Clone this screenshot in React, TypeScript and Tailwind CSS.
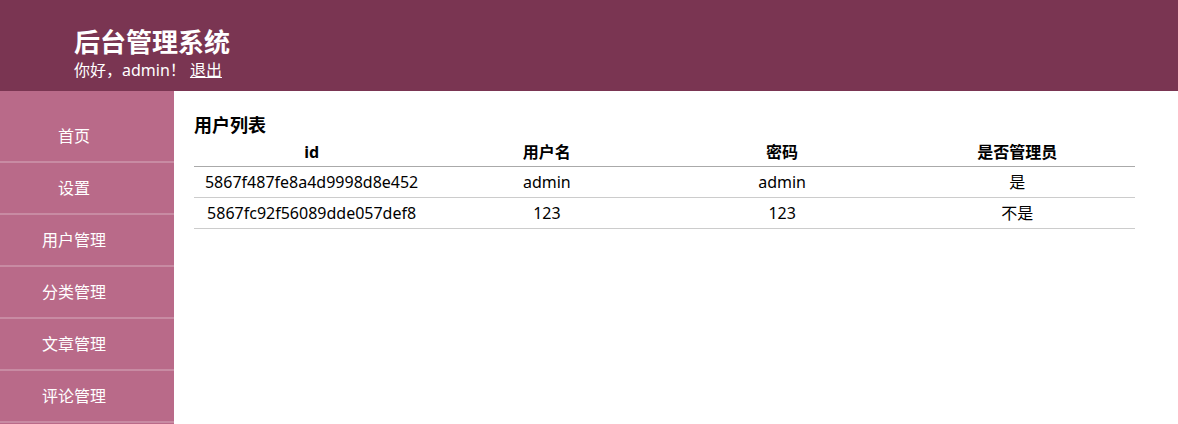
import React from 'react';

const menu = ['首页', '设置', '用户管理', '分类管理', '文章管理', '评论管理'];

const users = [
  { id: '5867f487fe8a4d9998d8e452', username: 'admin', password: 'admin', isAdmin: '是' },
  { id: '5867fc92f56089dde057def8', username: '123', password: '123', isAdmin: '不是' },
];

const App = () => {
  return (
    <div
      className="h-screen flex flex-col bg-white text-black"
      style={{ fontFamily: '"Noto Sans", "Noto Sans CJK SC", sans-serif' }}
    >
      {/* Header */}
      <header className="h-[91px] shrink-0 bg-[#7a3552] text-white pl-[74px] pt-[25px]">
        <h1 className="text-[26px] font-bold leading-[34px]">后台管理系统</h1>
        <p className="text-[16px] leading-[22px]">
          你好，admin！ <a href="#" className="underline">退出</a>
        </p>
      </header>

      <div className="flex flex-1 min-h-0">
        {/* Sidebar */}
        <nav className="w-[174px] shrink-0 bg-[#b96a89] pt-[20px]">
          <ul>
            {menu.map((item) => (
              <li
                key={item}
                className="h-[52px] border-b-2 border-[#c88ba3] text-white text-[16px] flex items-center justify-center pr-[26px]"
              >
                {item}
              </li>
            ))}
          </ul>
        </nav>

        {/* Content */}
        <main className="flex-1 pl-[20px] pt-[21px]">
          <h3 className="text-[18px] font-bold leading-[26px]">用户列表</h3>
          <table className="w-[941px] table-fixed border-collapse text-[16px]">
            <thead>
              <tr className="h-[28px] border-b border-[#aaaaaa]">
                <th className="font-bold">id</th>
                <th className="font-bold">用户名</th>
                <th className="font-bold">密码</th>
                <th className="font-bold">是否管理员</th>
              </tr>
            </thead>
            <tbody>
              {users.map((u) => (
                <tr key={u.id} className="h-[31px] border-b border-[#cccccc] text-center">
                  <td>{u.id}</td>
                  <td>{u.username}</td>
                  <td>{u.password}</td>
                  <td>{u.isAdmin}</td>
                </tr>
              ))}
            </tbody>
          </table>
        </main>
      </div>
    </div>
  );
};

export default App;
